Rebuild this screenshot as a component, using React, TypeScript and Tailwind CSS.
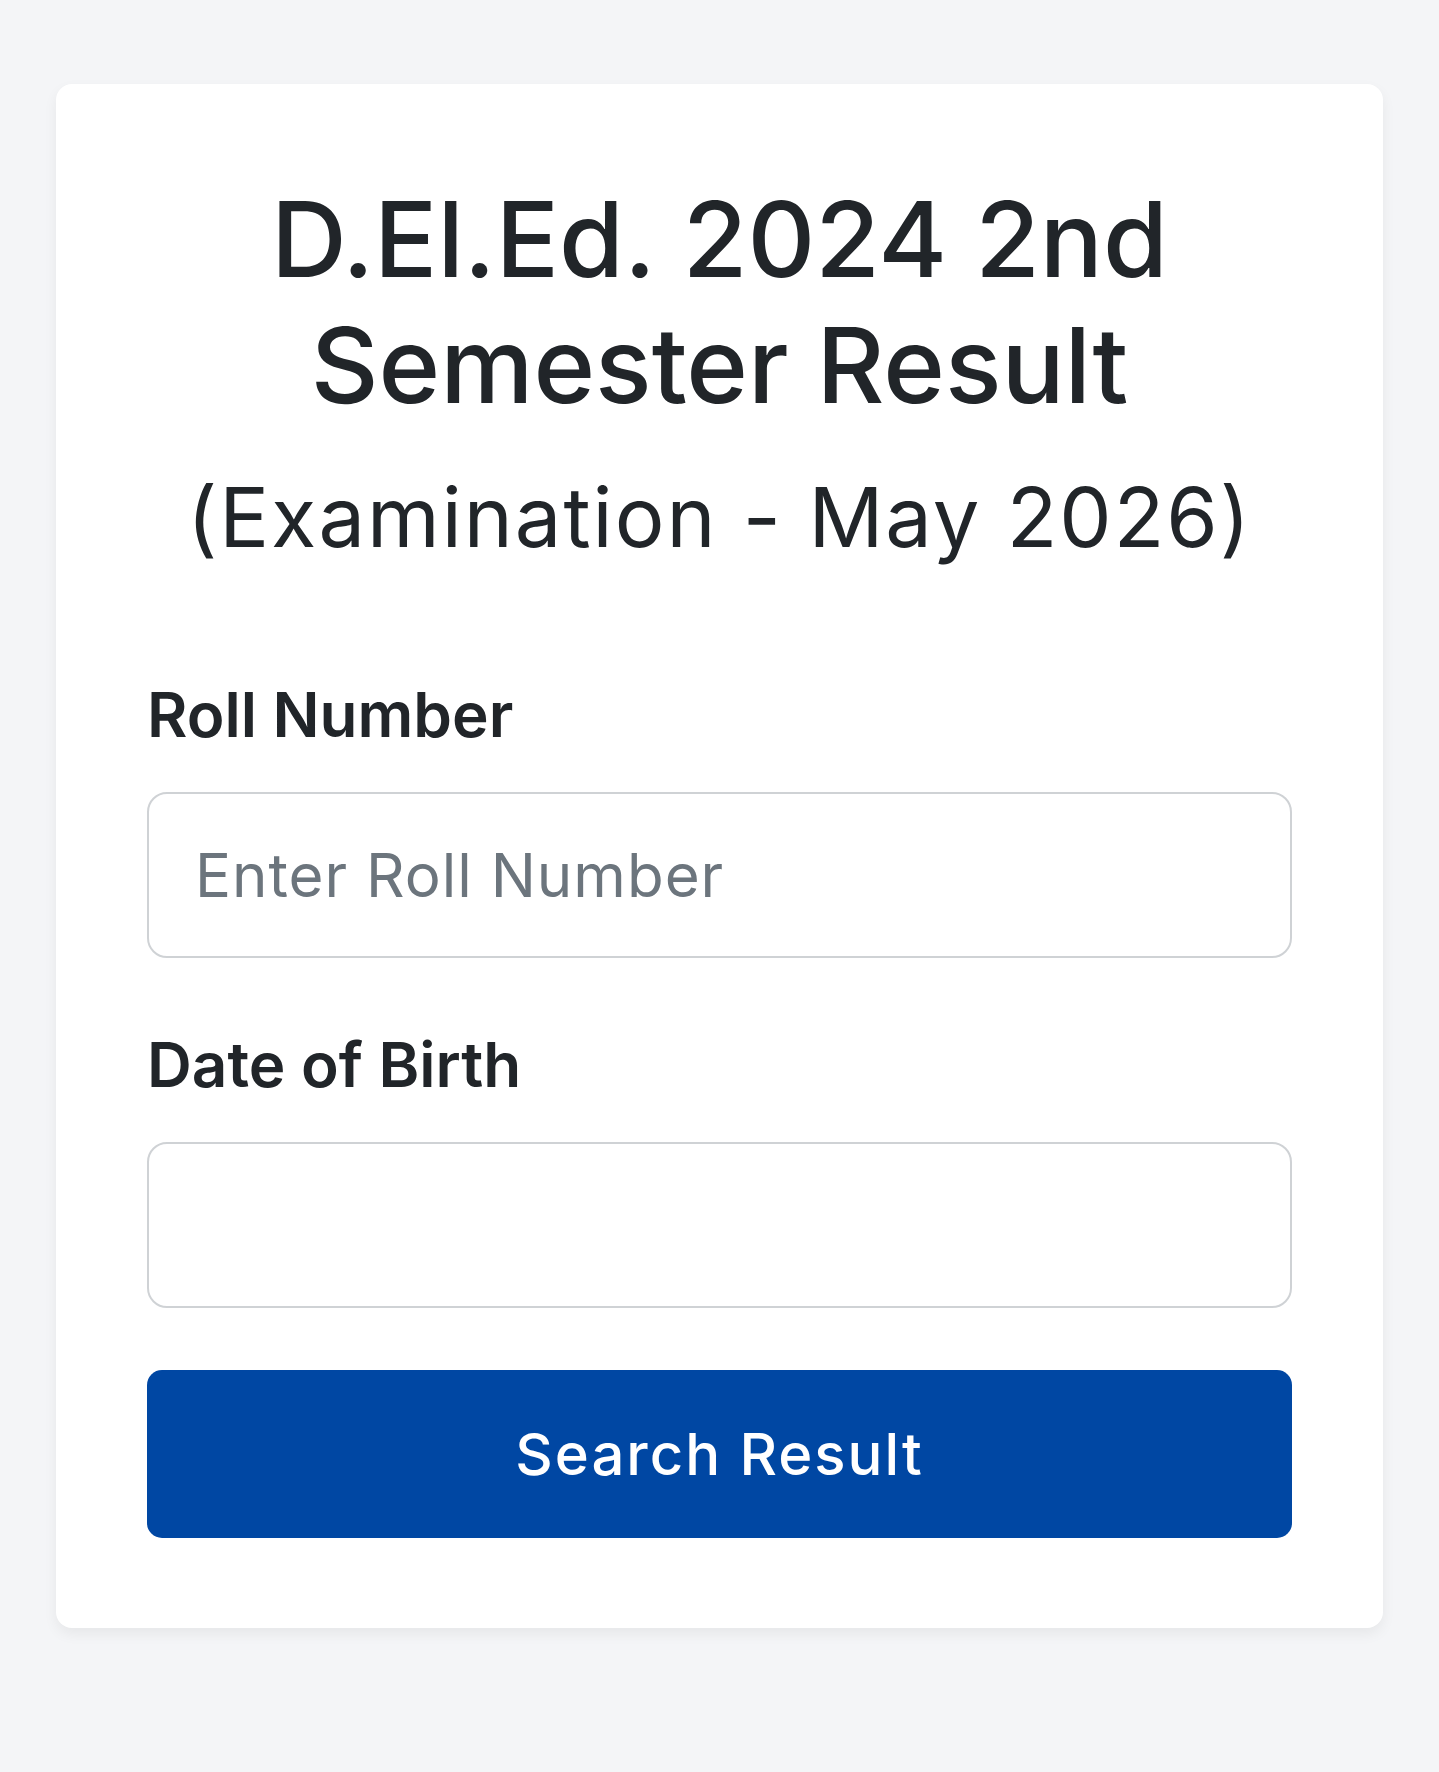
import React, { useState } from 'react';

const font = { fontFamily: 'Inter, "Noto Sans", sans-serif' };

const App: React.FC = () => {
  const [rollNo, setRollNo] = useState('');
  const [dob, setDob] = useState('');

  const handleSubmit = (e: React.FormEvent) => {
    e.preventDefault();
  };

  return (
    <div className="min-h-screen bg-[#f4f5f7] px-[56px] pt-[84px] pb-[145px] font-['Inter','Noto_Sans',sans-serif] text-[#212529]" style={font}>
      <div className="bg-white rounded-[16px] shadow-[0_6px_14px_rgba(0,0,0,0.06)] px-[91px] pt-[92px] pb-[90px]">
        <h1 className="text-center text-[105px] leading-[126px] font-medium">
          D.El.Ed. 2024 2nd Semester Result
        </h1>
        <p className="mt-[40px] text-center text-[83px] leading-[98px] font-normal tracking-[2px]">
          (Examination - May 2026)
        </p>

        <form onSubmit={handleSubmit} className="mt-[112px]">
          <label className="block text-[62px] leading-[74px] font-semibold">Roll Number</label>
          <input
            type="text"
            placeholder="Enter Roll Number"
            value={rollNo}
            onChange={(e) => setRollNo(e.target.value)}
            className="mt-[40px] block w-full h-[166px] px-[46px] rounded-[20px] border-2 border-[#cfd2d5] bg-white text-[60px] tracking-[1px] text-[#212529] placeholder:text-[#6c757d] outline-none"
          />

          <label className="mt-[70px] block text-[62px] leading-[74px] font-semibold">Date of Birth</label>
          <input
            type="text"
            value={dob}
            onChange={(e) => setDob(e.target.value)}
            className="mt-[40px] block w-full h-[166px] px-[46px] rounded-[20px] border-2 border-[#cfd2d5] bg-white text-[60px] text-[#212529] outline-none"
          />

          <button
            type="submit"
            className="mt-[62px] w-full h-[168px] rounded-[15px] bg-[#0047a3] text-white text-[58px] font-medium tracking-[2px]"
          >
            Search Result
          </button>
        </form>
      </div>
    </div>
  );
};

export default App;
